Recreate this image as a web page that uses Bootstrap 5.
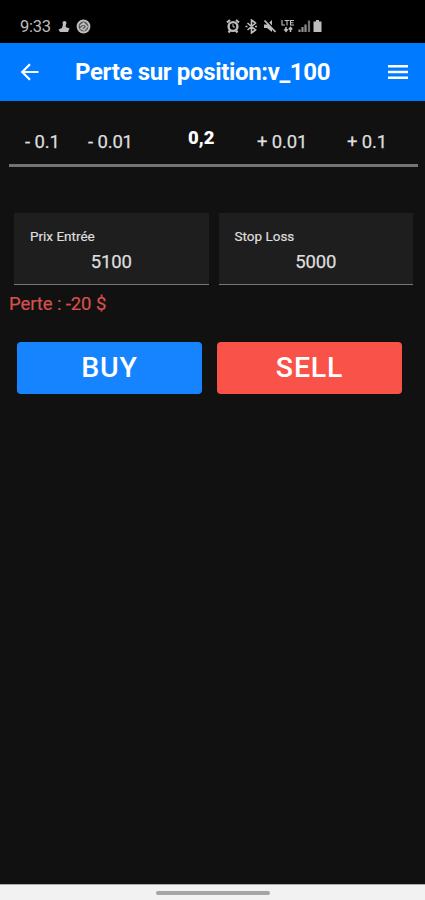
<!DOCTYPE html>
<html lang="fr">
<head>
<meta charset="utf-8">
<meta name="viewport" content="width=device-width, initial-scale=1">
<title>Perte sur position</title>
<link href="https://cdn.jsdelivr.net/npm/bootstrap@5.3.0/dist/css/bootstrap.min.css" rel="stylesheet">
<style>
body{font-family:Roboto,"Liberation Sans",sans-serif;background:#111;color:#dedede;line-height:1}
.screen{height:900px;overflow:hidden}
.status{height:43px;background:#000;padding:10px 101px 0 20px;color:#bdbdbd;font-size:16.5px}
.status svg{display:block}
.clock{letter-spacing:-.3px;width:31px;padding-top:1px}
.appbar{height:58px;background:#007aff;padding:0 17px 0 20px;color:#fff}
.appbar h1{font-size:24px;font-weight:700;letter-spacing:-.34px;margin:0 0 0 36px;line-height:28px}
.lots{height:66px;margin:0 7px 0 9px;padding-left:16px;border-bottom:3px solid #747474;grid-template-columns:63px 100px 69px 90px auto;padding-top:31px;font-size:18.5px}
.lots button{font-size:inherit;line-height:20px;color:#dedede;white-space:nowrap;letter-spacing:-.15px;-webkit-text-stroke:.25px currentColor}
.lots strong{color:#fff;font-weight:900;font-size:18.5px;line-height:20px;margin-top:-4px}
.fields{padding:46px 12px 0 14px;gap:10px}
.field{height:72px;background:#1e1e1e;border-bottom:1px solid #777;padding:16px 16px 0}
.field label{font-size:13.5px;line-height:15px;color:#dedede;-webkit-text-stroke:.2px currentColor}
.field input{font-size:18.5px;line-height:22px;height:22px;margin-top:7px;color:#dedede;padding:0;letter-spacing:-.2px;-webkit-text-stroke:.25px currentColor}
.loss{margin:9px 0 0 9px;font-size:18.5px;line-height:20px;color:#d6504c;letter-spacing:-.1px;-webkit-text-stroke:.2px currentColor}
.actions{padding:28px 23px 0 17px;gap:15px}
.actions .btn{height:52px;border:0;border-radius:4px;font-size:28.5px;font-weight:500;letter-spacing:.8px;color:#fff;padding:0;line-height:52px}
.buy{background:#1684ff!important}
.sell{background:#f95249!important}
.homebar{height:16px;background:#f2f2f2;border-top:1px solid #aaa}
.homebar span{width:114px;height:4px;background:#a5a5a5;margin-top:6px}
</style>
</head>
<body>
<div class="screen d-flex flex-column">
  <div class="status d-flex align-items-center">
    <span class="clock">9:33</span>
    <svg width="12" height="12" viewBox="0 0 12 12" fill="currentColor" style="margin-left:7px"><circle cx="6.500" cy="2" r="2"/><path d="M5 3h3l-.3 3 3.800 1.500-1.500 3.500H2L.5 8.500 4 7z"/></svg>
    <svg width="15" height="15" viewBox="0 0 15 15" style="margin-left:6px"><circle cx="7.500" cy="7.500" r="5.900" fill="#555" stroke="currentColor" stroke-width="2"/><path d="M4 7l3.500-3 3.500 3.500L8 11 5 9.500l3-2.500" fill="none" stroke="currentColor" stroke-width="1.600"/></svg>
    <div class="d-flex align-items-center ms-auto">
      <svg width="98" height="15" viewBox="0 0 98 15" fill="none" stroke="currentColor">
        <circle cx="7" cy="7.500" r="4.400" stroke-width="2.400"/><path d="M1 3.500L4 1M13 3.500L10 1M2.500 13.500l2-2.500M11.500 13.500l-2-2.500" stroke-width="2.200"/><path d="M7 5v3h2" stroke-width="1"/>
        <path d="M21.500 4l8 7-4 3V1l4 3-8 7M19.500 7.500h2M29 7.500h2" stroke-width="1.600"/>
        <path d="M38 5.500h3l5-4.500v12l-5-4h-3z" fill="currentColor" stroke="none"/><path d="M39.500 .5l11 12" stroke="#000" stroke-width="1.500"/><path d="M38.500 1.500l11 11.500" stroke-width="1.800"/>
        <path d="M56 1v5H59M58.500 1.500h5M61 1.500V6.500M68 1.500h-3.500v4.500H68M64.500 3.700H67.500" stroke-width="1.100"/><path d="M60 8v4M58.300 10.300l1.700 2 1.700-2M64.500 13V9M62.800 10.500l1.700-2 1.700 2" stroke-width="1.600"/>
        <path d="M73.500 10.500V13M76.500 8v5M79.500 5.500V13" stroke-width="2.200" opacity=".75"/><path d="M83 1.500V13" stroke-width="2.200" opacity=".6"/>
        <path d="M87.500 2.500h2.500V1h3v1.500h2.500V13h-8z" fill="currentColor" stroke="none"/>
      </svg>
    </div>
  </div>
  <header class="appbar d-flex align-items-center">
    <svg width="19" height="18" viewBox="0 0 19 18" fill="none" stroke="#fff" stroke-width="2.200"><path d="M18.500 9H2.500M10 1.200L2.200 9l7.800 7.800"/></svg>
    <h1>Perte sur position:v_100</h1>
    <svg class="ms-auto" width="20" height="14" viewBox="0 0 20 14" fill="#fff"><path d="M0 0h20v2.400H0zM0 5.800h20v2.400H0zM0 11.600h20V14H0z"/></svg>
  </header>
  <main class="flex-grow-1">
    <div class="lots d-grid align-items-start">
      <button class="btn border-0 p-0 text-start">- 0.1</button>
      <button class="btn border-0 p-0 text-start">- 0.01</button>
      <strong>0,2</strong>
      <button class="btn border-0 p-0 text-start">+ 0.01</button>
      <button class="btn border-0 p-0 text-start">+ 0.1</button>
    </div>
    <div class="fields d-flex">
      <div class="field flex-fill w-50">
        <label class="d-block" for="entry">Prix Entrée</label>
        <input id="entry" class="w-100 d-block border-0 bg-transparent text-center" value="5100">
      </div>
      <div class="field flex-fill w-50">
        <label class="d-block" for="stop">Stop Loss</label>
        <input id="stop" class="w-100 d-block border-0 bg-transparent text-center" value="5000">
      </div>
    </div>
    <p class="loss">Perte : -20 $</p>
    <div class="actions d-flex">
      <button class="btn buy flex-fill w-50">BUY</button>
      <button class="btn sell flex-fill w-50">SELL</button>
    </div>
  </main>
  <footer class="homebar d-flex justify-content-center"><span class="rounded-pill"></span></footer>
</div>
<script src="https://cdn.jsdelivr.net/npm/bootstrap@5.3.0/dist/js/bootstrap.bundle.min.js"></script>
</body>
</html>
